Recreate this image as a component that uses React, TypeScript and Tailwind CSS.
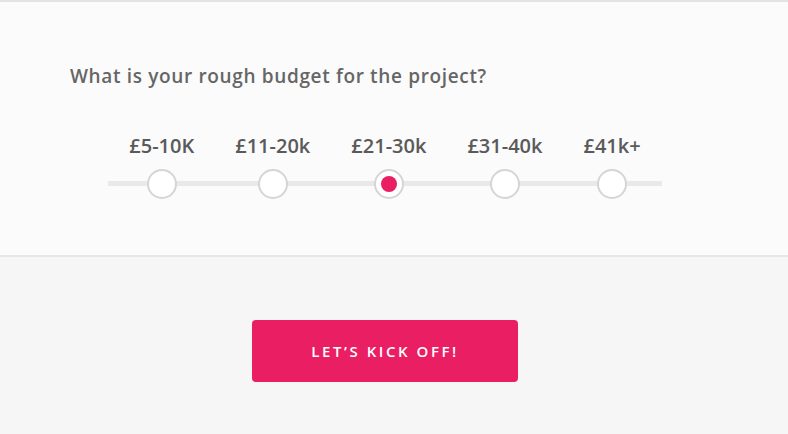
import React from "react";

const options = ["£5-10K", "£11-20k", "£21-30k", "£31-40k", "£41k+"];
const selected = 2;

export default function App() {
  return (
    <div
      className="w-[788px] h-[434px] flex flex-col overflow-hidden"
      style={{ fontFamily: "'Open Sans', Lato, sans-serif" }}
    >
      <div className="h-[257px] border-t-2 border-b-2 border-t-[#e4e4e4] border-b-[#e6e6e6] bg-[#fbfbfb] w-full">
        <div className="w-[770px]">
          <h2 className="pl-[70px] pt-[63px] text-[19px] leading-[22px] font-semibold text-[#666666] tracking-[0.65px]">
            What is your rough budget for the project?
          </h2>
          <div className="relative mx-auto w-[554px] mt-[47px]">
            <div className="absolute left-0 right-0 top-[47px] h-[5px] bg-[#e9e9e9]" />
            <div className="relative flex gap-[41px] justify-center">
              {options.map((o, i) => (
                <div key={o} className="flex flex-col items-center">
                  <div className="text-[20px] leading-[24px] font-semibold text-[#5a5a5a] whitespace-nowrap">
                    {o}
                  </div>
                  <div className="mt-[11px] w-[30px] h-[30px] rounded-full border-2 border-[#d5d5d5] bg-white flex items-center justify-center">
                    {i === selected && (
                      <div className="w-[16px] h-[16px] rounded-full bg-[#ea1e63]" />
                    )}
                  </div>
                </div>
              ))}
            </div>
          </div>
        </div>
      </div>
      <div className="flex-1 bg-[#f6f6f6] w-full">
        <div className="w-[770px] flex justify-center pt-[63px]">
          <button className="w-[266px] h-[62px] rounded-[4px] bg-[#ea1e63] text-white text-[15px] font-semibold tracking-[2.55px] leading-none">
            LET’S KICK OFF!
          </button>
        </div>
      </div>
    </div>
  );
}
